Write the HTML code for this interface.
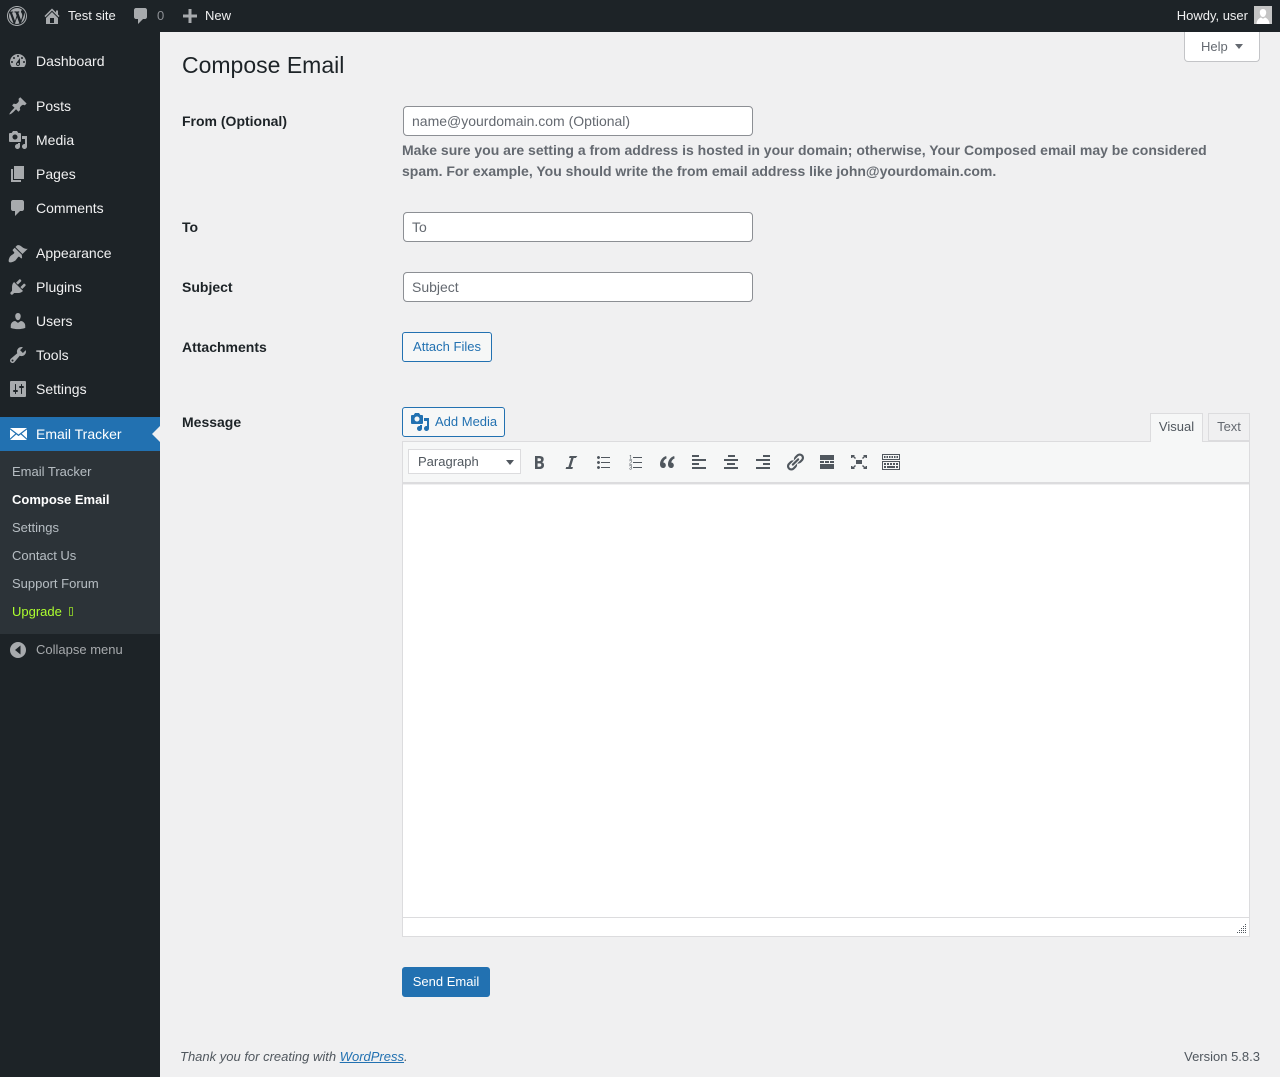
<!DOCTYPE html>
<html lang="en"><head><meta charset="utf-8"><title>Compose Email</title>
<style>
*{box-sizing:border-box}
html,body{margin:0;padding:0}
body{width:1280px;height:1077px;position:relative;overflow:hidden;background:#f0f0f1;font-family:"Liberation Sans",sans-serif;font-size:13px;color:#3c434a}
.a{position:absolute;white-space:nowrap}
#bar{left:0;top:0;width:1280px;height:32px;background:#1d2327}
#side{left:0;top:32px;width:160px;height:1045px;background:#1d2327}
.bt{color:#f0f0f1;font-size:13px;line-height:32px;top:0}
.m{left:36px;color:#f0f0f1;font-size:14px;line-height:20px}
.s{left:12px;color:rgba(240,246,252,.7);font-size:13px;line-height:18px}
svg{position:absolute;display:block;fill:#a7aaad;overflow:visible}
.t svg,svg.t{fill:#50575e}
.lb{left:182px;font-size:14px;font-weight:700;color:#1d2327;line-height:20px}
.in{left:403px;width:350px;height:30px;background:#fff;border:1px solid #8c8f94;border-radius:4px;color:#646970;font-size:14px;line-height:28px;padding-left:8px}
.btn{border:1px solid #2271b1;border-radius:3px;color:#2271b1;background:#f6f7f7;font-size:13px;line-height:28px;height:30px}
</style></head><body>

<div class="a" id="bar"></div>
<svg style="left:7px;top:6px" width="20" height="20" viewBox="0 0 20 20"><path d="M20 10c0-5.52-4.48-10-10-10S0 4.48 0 10s4.48 10 10 10 10-4.48 10-10zM10 1.01c4.96 0 8.99 4.03 8.99 8.99s-4.03 8.99-8.99 8.99S1.01 14.96 1.01 10 5.04 1.01 10 1.01zM8.01 14.82L4.96 6.61c.49-.03 1.05-.08 1.05-.08.43-.05.38-1.01-.06-.99 0 0-1.29.1-2.13.1-.15 0-.33 0-.52-.01 1.44-2.17 3.9-3.6 6.7-3.6 2.09 0 3.99.79 5.41 2.09-.6-.08-1.45.35-1.45 1.42 0 .66.38 1.22.79 1.88.31.54.5 1.22.5 2.21 0 1.34-1.27 4.48-1.27 4.48l-2.71-7.5c.48-.03.75-.16.75-.16.43-.05.38-1.1-.05-1.08 0 0-1.3.11-2.14.11-.78 0-2.11-.11-2.11-.11-.43-.02-.48 1.06-.05 1.08l.84.08 1.12 3.04zm6.02 2.15L16.64 10s.67-1.69.39-3.81c.63 1.14.94 2.42.94 3.81 0 2.96-1.56 5.58-3.94 6.97zM2.68 6.77L6.5 17.25c-2.67-1.3-4.47-4.08-4.47-7.25 0-1.16.2-2.23.65-3.23zm7.45 4.53l2.29 6.25c-.76.27-1.58.42-2.42.42-.71 0-1.4-.11-2.05-.3z"/></svg>
<svg style="left:42px;top:6px" width="20" height="20" viewBox="0 0 20 20"><path d="M16 8.5l1.53 1.53-1.06 1.06L10 4.62l-6.47 6.47-1.06-1.06L10 2.5l4 4v-2h2v4zm-6-2.46l6 5.99V18H4v-5.97zM12 17v-5H8v5h4z"/></svg>
<div class="a bt" style="left:68px">Test site</div>
<svg style="left:131px;top:6px" width="20" height="20" viewBox="0 0 20 20"><path d="M5 2h9c1.1 0 2 .9 2 2v7c0 1.1-.9 2-2 2h-2l-5 5v-5H5c-1.1 0-2-.9-2-2V4c0-1.1.9-2 2-2z"/></svg>
<div class="a bt" style="left:157px;color:#8c8f94">0</div>
<svg style="left:183px;top:9px" width="14" height="14" viewBox="0 0 14 14"><path d="M5.5 0h3v5.5H14v3H8.5V14h-3V8.500H0v-3h5.500z"/></svg>
<div class="a bt" style="left:205px">New</div>
<div class="a bt" style="right:32px">Howdy, user</div>
<div class="a" style="left:1254px;top:6px;width:18px;height:18px;background:#c4c4c4;overflow:hidden"><svg style="left:0;top:0" width="18" height="18" viewBox="0 0 18 18"><path fill="#fff" d="M9 3c2 0 3.200 1.500 3.200 3.500S11 11 9 11 5.800 8.500 5.800 6.500 7 3 9 3zM2.500 18c0-3.500 2.500-6 4.500-6.500l2 1.300 2-1.300c2 .5 4.500 3 4.500 6.500z" style="fill:#fff"/></svg></div>

<div class="a" id="side"></div>
<div class="a" style="left:0;top:417px;width:160px;height:34px;background:#2271b1"></div>
<div class="a" style="left:0;top:451px;width:160px;height:183px;background:#2c3338"></div>
<div class="a" style="left:152px;top:426px;width:0;height:0;border:8px solid transparent;border-left:0;border-right-color:#f0f0f1"></div>

<svg style="left:8px;top:51px" width="20" height="20" viewBox="0 0 20 20"><path d="M3.760 16h12.480c1.100-1.370 1.760-3.110 1.760-5 0-4.420-3.580-8-8-8s-8 3.580-8 8c0 1.890.66 3.630 1.760 5zM10 4c.55 0 1 .45 1 1s-.45 1-1 1-1-.45-1-1 .45-1 1-1zM6 6c.55 0 1 .45 1 1s-.45 1-1 1-1-.45-1-1 .45-1 1-1zm8 0c.55 0 1 .45 1 1s-.45 1-1 1-1-.45-1-1 .45-1 1-1zm-5.370 5.550L12 7v6c0 1.100-.9 2-2 2s-2-.9-2-2c0-.57.24-1.080.63-1.450zM4 10c.55 0 1 .45 1 1s-.45 1-1 1-1-.45-1-1 .45-1 1-1zm12 0c.55 0 1 .45 1 1s-.45 1-1 1-1-.45-1-1 .45-1 1-1zm-5 3c0-.55-.45-1-1-1s-1 .45-1 1 .45 1 1 1 1-.45 1-1z"/></svg>
<div class="a m" style="top:51px">Dashboard</div>
<svg style="left:8px;top:96px" width="20" height="20" viewBox="0 0 20 20"><path d="M10.440 3.020l1.820-1.820 6.360 6.350-1.830 1.820c-1.050-.68-2.480-.57-3.410.36l-.75.75c-.92.93-1.040 2.350-.35 3.410l-1.830 1.820-2.410-2.410-2.800 2.790c-.42.42-3.380 2.710-3.800 2.290s1.860-3.390 2.280-3.810l2.790-2.790L4.100 9.360l1.830-1.820c1.050.69 2.480.57 3.400-.36l.75-.75c.93-.92 1.050-2.350.36-3.410z"/></svg>
<div class="a m" style="top:96px">Posts</div>
<svg style="left:8px;top:130px" width="20" height="20" viewBox="0 0 20 20"><path d="M13 11V4c0-.55-.45-1-1-1h-1.670L9 1H5L3.670 3H2c-.55 0-1 .45-1 1v7c0 .55.45 1 1 1h10c.55 0 1-.45 1-1zM7 4.500c1.380 0 2.500 1.120 2.500 2.500S8.380 9.500 7 9.500 4.500 8.380 4.500 7 5.620 4.500 7 4.500zM14 6h5v10.500c0 1.380-1.120 2.500-2.500 2.500S14 17.880 14 16.500s1.120-2.500 2.500-2.500c.17 0 .34.02.5.05V9h-3V6zm-4 8.050V13h2v3.500c0 1.380-1.120 2.500-2.500 2.500S7 17.880 7 16.500 8.120 14 9.500 14c.17 0 .34.02.5.05z"/></svg>
<div class="a m" style="top:130px">Media</div>
<svg style="left:8px;top:164px" width="20" height="20" viewBox="0 0 20 20"><path d="M6 15V2h10v13H6zm-1 1h8v2H3V5h2v11z"/></svg>
<div class="a m" style="top:164px">Pages</div>
<svg style="left:8px;top:198px" width="20" height="20" viewBox="0 0 20 20"><path d="M5 2h9c1.100 0 2 .9 2 2v7c0 1.100-.9 2-2 2h-2l-5 5v-5H5c-1.100 0-2-.9-2-2V4c0-1.100.9-2 2-2z"/></svg>
<div class="a m" style="top:198px">Comments</div>
<svg style="left:8px;top:243px" width="20" height="20" viewBox="0 0 20 20"><path d="M14.480 11.060L7.410 3.990l1.500-1.500c.5-.56 2.300-.47 3.510.32 1.210.8 1.430 1.280 2.910 2.100 1.180.64 2.450 1.260 4.450.85zm-.71.71L6.700 4.700 4.930 6.470c-.39.39-.39 1.020 0 1.410l1.060 1.060c.39.39.39 1.030 0 1.420-.6.6-1.430 1.110-2.210 1.690-.35.26-.7.53-1.010.84C1.430 13.710 0 18 1.010 18.990c1 1 5.280-.41 6.660-1.790.31-.31.58-.66.85-1.020.57-.78 1.080-1.600 1.690-2.210.39-.39 1.020-.39 1.410 0l1.060 1.060c.39.39 1.020.39 1.410 0z"/></svg>
<div class="a m" style="top:243px">Appearance</div>
<svg style="left:8px;top:277px" width="20" height="20" viewBox="0 0 20 20"><path d="M13.110 4.360L9.870 7.600 8 5.730l3.240-3.240c.35-.34 1.050-.2 1.560.32.52.51.66 1.210.31 1.550zm-8 1.770l.91-1.120 9.010 9.010-1.190.84c-.71.71-2.630 1.160-3.820 1.160H6.140L4.900 17.260c-.59.59-1.540.59-2.120 0-.59-.58-.59-1.530 0-2.120l1.240-1.240v-3.880c0-1.130.4-3.190 1.090-3.890zm7.260 3.970l3.240-3.240c.34-.35 1.040-.21 1.550.31.52.51.66 1.210.31 1.550l-3.240 3.250z"/></svg>
<div class="a m" style="top:277px">Plugins</div>
<svg style="left:8px;top:311px" width="20" height="20" viewBox="0 0 20 20"><path d="M10 9.250c-2.270 0-2.730-3.440-2.730-3.440C7 4.020 7.820 2 9.970 2c2.160 0 2.980 2.020 2.710 3.810 0 0-.41 3.440-2.680 3.440zm0 2.570L12.720 10c2.390 0 4.520 2.330 4.520 4.530v2.490s-3.650 1.130-7.240 1.130c-3.650 0-7.240-1.130-7.240-1.130v-2.490c0-2.250 1.940-4.480 4.470-4.480z"/></svg>
<div class="a m" style="top:311px">Users</div>
<svg style="left:8px;top:345px" width="20" height="20" viewBox="0 0 20 20"><path d="M16.680 9.770c-1.340 1.340-3.300 1.670-4.950.99l-5.410 6.520c-.99.99-2.590.99-3.580 0s-.99-2.590 0-3.570l6.520-5.420c-.68-1.650-.35-3.610.99-4.950 1.280-1.280 3.120-1.620 4.720-1.060l-2.890 2.890 2.820 2.820 2.860-2.870c.53 1.580.18 3.390-1.080 4.650zM3.810 16.210c.4.39 1.040.39 1.430 0 .4-.4.4-1.040 0-1.430-.39-.4-1.030-.4-1.430 0-.39.39-.39 1.030 0 1.430z"/></svg>
<div class="a m" style="top:345px">Tools</div>
<svg style="left:8px;top:379px" width="20" height="20" viewBox="0 0 20 20"><path d="M18 17V3c0-.55-.45-1-1-1H3c-.55 0-1 .45-1 1v14c0 .55.45 1 1 1h14c.55 0 1-.45 1-1zM8 11h1c.55 0 1 .45 1 1s-.45 1-1 1H8v1.500c0 .28-.22.5-.5.5s-.5-.22-.5-.5V13H6c-.55 0-1-.45-1-1s.45-1 1-1h1V5.500c0-.28.22-.5.5-.5s.5.22.5.5V11zm5-2h-1c-.55 0-1-.45-1-1s.45-1 1-1h1V5.500c0-.28.22-.5.5-.5s.5.22.5.5V7h1c.55 0 1 .45 1 1s-.45 1-1 1h-1v5.500c0 .28-.22.5-.5.5s-.5-.22-.5-.5V9z"/></svg>
<div class="a m" style="top:379px">Settings</div>
<svg style="left:10px;top:428px" width="17" height="12" viewBox="0 0 17 12"><path style="fill:#fff" d="M0 0h17L8.500 6.500zM0 1.500l5.300 4.100L0 10.500zM17 1.500v9l-5.300-4.900zM6.300 6.400l2.200 1.700 2.200-1.700L17 12H0z"/></svg>
<div class="a m" style="top:424px;color:#fff">Email Tracker</div>

<div class="a s" style="top:463px">Email Tracker</div>
<div class="a s" style="top:491px;color:#fff;font-weight:700">Compose Email</div>
<div class="a s" style="top:519px">Settings</div>
<div class="a s" style="top:547px">Contact Us</div>
<div class="a s" style="top:575px">Support Forum</div>
<div class="a s" style="top:603px;color:#adff2f">Upgrade</div>
<div class="a" style="left:69px;top:607px;width:4px;height:9px;border:1px solid #7fb82a"></div>
<svg style="left:10px;top:642px" width="16" height="16" viewBox="0 0 16 16"><path fill-rule="evenodd" d="M8 0a8 8 0 1 1 0 16A8 8 0 0 1 8 0zM10.500 3.500L5 8l5.500 4.500z"/></svg>
<div class="a s" style="left:36px;top:641px;color:#a7aaad">Collapse menu</div>

<div class="a" style="left:1184px;top:32px;width:76px;height:30px;background:#fff;border:1px solid #c3c4c7;border-top:0;border-radius:0 0 4px 4px"></div>
<div class="a" style="left:1201px;top:38px;font-size:13px;line-height:18px;color:#646970">Help</div>
<div class="a" style="left:1235px;top:44px;width:0;height:0;border:4px solid transparent;border-top:5px solid #646970;border-bottom:0"></div>

<div class="a" style="left:182px;top:50px;font-size:23px;line-height:30px;color:#1d2327">Compose Email</div>

<div class="a lb" style="top:111px">From (Optional)</div>
<div class="a in" style="top:106px">name@yourdomain.com (Optional)</div>
<div class="a" style="left:402px;top:140px;font-size:14px;font-weight:700;line-height:21px;color:#646970">Make sure you are setting a from address is hosted in your domain; otherwise, Your Composed email may be considered<br>spam. For example, You should write the from email address like john@yourdomain.com.</div>

<div class="a lb" style="top:217px">To</div>
<div class="a in" style="top:212px">To</div>
<div class="a lb" style="top:277px">Subject</div>
<div class="a in" style="top:272px">Subject</div>
<div class="a lb" style="top:337px">Attachments</div>
<div class="a btn" style="left:402px;top:332px;width:90px;text-align:center">Attach Files</div>

<div class="a lb" style="top:412px">Message</div>
<div class="a btn" style="left:402px;top:407px;width:103px;padding-left:32px">Add Media</div>
<svg style="left:410px;top:412px" width="20" height="20" viewBox="0 0 20 20"><path style="fill:#2271b1" d="M13 11V4c0-.55-.45-1-1-1h-1.670L9 1H5L3.670 3H2c-.55 0-1 .45-1 1v7c0 .55.45 1 1 1h10c.55 0 1-.45 1-1zM7 4.500c1.380 0 2.500 1.120 2.500 2.500S8.380 9.500 7 9.500 4.500 8.380 4.500 7 5.620 4.500 7 4.500zM14 6h5v10.500c0 1.380-1.120 2.500-2.500 2.500S14 17.880 14 16.500s1.120-2.500 2.500-2.500c.17 0 .34.02.5.05V9h-3V6zm-4 8.050V13h2v3.500c0 1.380-1.120 2.500-2.500 2.500S7 17.880 7 16.500 8.120 14 9.500 14c.17 0 .34.02.5.05z"/></svg>

<div class="a" style="left:1208px;top:413px;width:42px;height:28px;background:#f0f0f1;border:1px solid #dcdcde;color:#646970;text-align:center;line-height:26px">Text</div>
<div class="a" style="left:402px;top:441px;width:848px;height:496px;background:#fff;border:1px solid #dcdcde"></div>
<div class="a" style="left:403px;top:442px;width:846px;height:41px;background:#f6f7f7"></div>
<div class="a" style="left:403px;top:482px;width:846px;height:2px;background:#dcdcde"></div>
<div class="a" style="left:403px;top:484px;width:846px;height:1px;background:#f0f0f1"></div>
<div class="a" style="left:1150px;top:413px;width:53px;height:29px;background:#f6f7f7;border:1px solid #dcdcde;border-bottom:0;color:#50575e;text-align:center;line-height:26px">Visual</div>
<div class="a" style="left:403px;top:917px;width:846px;height:1px;background:#dcdcde"></div>

<div class="a" style="left:408px;top:449px;width:113px;height:25px;background:#fff;border:1px solid #dcdcde;color:#50575e;line-height:23px;padding-left:9px">Paragraph</div>
<div class="a" style="left:506px;top:460px;width:0;height:0;border:4px solid transparent;border-top:5px solid #50575e;border-bottom:0"></div>

<svg class="t" style="left:529px;top:452px" width="20" height="20" viewBox="0 0 20 20"><path fill-rule="evenodd" d="M6 4v13h4.540c1.370 0 2.460-.33 3.260-1 .8-.66 1.200-1.580 1.200-2.770 0-.84-.17-1.510-.51-2.010s-.9-.85-1.670-1.030v-.09c.57-.1 1.020-.4 1.360-.9s.51-1.130.51-1.910c0-1.140-.39-1.980-1.170-2.500C12.750 4.260 11.500 4 9.780 4H6zm2.570 5.150V6.260h1.360c.73 0 1.270.11 1.610.32.34.22.51.58.51 1.070 0 .54-.16.92-.47 1.150s-.82.35-1.510.35h-1.500zm0 2.190h1.600c1.440 0 2.160.53 2.160 1.610 0 .6-.17 1.050-.51 1.340s-.86.45-1.570.45H8.570v-3.400z"/></svg>
<svg class="t" style="left:561px;top:452px" width="20" height="20" viewBox="0 0 20 20"><path d="M14.780 6h-2.130l-2.800 9h2.120l-.62 2H4.600l.62-2h2.140l2.800-9H8.030l.62-2h7.750z"/></svg>
<svg class="t" style="left:593px;top:452px" width="20" height="20" viewBox="0 0 20 20"><path d="M5.500 7C4.670 7 4 6.330 4 5.500 4 4.680 4.670 4 5.500 4 6.320 4 7 4.680 7 5.500 7 6.330 6.320 7 5.500 7zM8 5h9v1H8V5zm-2.500 7c-.83 0-1.500-.67-1.500-1.500C4 9.680 4.670 9 5.500 9c.82 0 1.500.68 1.500 1.500 0 .83-.68 1.500-1.500 1.500zM8 10h9v1H8v-1zm-2.500 7c-.83 0-1.500-.67-1.500-1.500 0-.82.67-1.500 1.500-1.500.82 0 1.500.68 1.500 1.500 0 .83-.68 1.500-1.500 1.500zM8 15h9v1H8v-1z"/></svg>
<svg class="t" style="left:625px;top:452px" width="20" height="20" viewBox="0 0 20 20"><path d="M8 5h9v1H8zM8 10h9v1H8zM8 15h9v1H8z"/><text x="4" y="7.500" font-size="6" font-family="Liberation Sans" style="fill:#50575e">1</text><text x="4" y="12.500" font-size="6" font-family="Liberation Sans" style="fill:#50575e">2</text><text x="4" y="17.500" font-size="6" font-family="Liberation Sans" style="fill:#50575e">3</text></svg>
<svg class="t" style="left:657px;top:452px" width="20" height="20" viewBox="0 0 20 20"><path d="M9.200 4C5.700 5.100 3 8 3 12.300 3 14.600 4.300 16 6 16c1.700 0 2.800-1.200 2.800-2.800 0-1.500-1-2.600-2.500-2.700.2-1.800 1.400-3.200 3.300-4.100zM17.200 4c-3.500 1.100-6.200 4-6.200 8.300 0 2.300 1.300 3.700 3 3.700 1.700 0 2.800-1.200 2.800-2.800 0-1.500-1-2.600-2.500-2.700.2-1.800 1.400-3.200 3.300-4.100z"/></svg>
<svg class="t" style="left:689px;top:452px" width="20" height="20" viewBox="0 0 20 20"><path d="M3 3h7v2H3zM3 7h14v2H3zM3 11h7v2H3zM3 15h14v2H3z"/></svg>
<svg class="t" style="left:721px;top:452px" width="20" height="20" viewBox="0 0 20 20"><path d="M7 3h7v2H7zM3 7h14v2H3zM6 11h8v2H6zM3 15h14v2H3z"/></svg>
<svg class="t" style="left:753px;top:452px" width="20" height="20" viewBox="0 0 20 20"><path d="M10 3h7v2h-7zM3 7h14v2H3zM10 11h7v2h-7zM3 15h14v2H3z"/></svg>
<svg class="t" style="left:785px;top:452px" width="20" height="20" viewBox="0 0 20 20"><path d="M17.740 2.760c1.680 1.690 1.680 4.410 0 6.100l-1.530 1.520c-1.120 1.120-2.700 1.470-4.140 1.090l2.620-2.610.76-.77.76-.76c.84-.84.84-2.200 0-3.040-.84-.85-2.200-.85-3.040 0l-.77.76-3.380 3.380c-.37-1.440-.02-3.020 1.100-4.140l1.520-1.530c1.690-1.680 4.420-1.680 6.100 0zM8.590 13.430l5.340-5.340c.42-.42.42-1.100 0-1.520-.44-.43-1.130-.39-1.530 0l-5.330 5.340c-.42.42-.42 1.100 0 1.520.44.43 1.130.39 1.520 0zm-.76 2.290l4.140-4.150c.38 1.440.03 3.020-1.090 4.140l-1.520 1.530c-1.690 1.680-4.410 1.680-6.100 0-1.680-1.680-1.680-4.420 0-6.100l1.530-1.520c1.120-1.120 2.700-1.470 4.140-1.100l-4.140 4.150c-.85.84-.85 2.200 0 3.050.84.84 2.200.84 3.040 0z"/></svg>
<svg class="t" style="left:817px;top:452px" width="20" height="20" viewBox="0 0 20 20"><path d="M3 3h14v5H3zM3 9h4v2H3zM8 9h4v2H8zM13 9h4v2h-4zM3 12h14v5H3z"/></svg>
<svg class="t" style="left:849px;top:452px" width="20" height="20" viewBox="0 0 20 20"><path d="M7 8h6v4H7zM2 3h4L5 4l2 2-1 1-2-2-1 1H2zM18 3v3h-1l-1-1-2 2-1-1 2-2-1-1zM2 17v-3h1l1 1 2-2 1 1-2 2 1 1zM18 17h-4l1-1-2-2 1-1 2 2 1-1h1z"/></svg>
<svg class="t" style="left:881px;top:452px" width="20" height="20" viewBox="0 0 20 20"><path fill-rule="evenodd" d="M1 2h18v6H1zM2 3v4h16V3zM3 4h1.500v2H3zM5.500 4H7v2H5.500zM8 4h1.500v2H8zM10.500 4H12v2h-1.500zM13 4h1.500v2H13zM15.500 4H17v2h-1.500zM1 9h18v9H1zM2 10v7h16v-7zM3 11h2v2H3zM6 11h2v2H6zM9 11h2v2H9zM12 11h2v2h-2zM15 11h2v2h-2zM3 14h2v2H3zM6 14h8v2H6zM15 14h2v2h-2z"/></svg>

<svg style="left:1237px;top:924px" width="10" height="10" viewBox="0 0 10 10"><path style="fill:#50575e" d="M8 0h1v1H8zM6 2h1v1H6zM8 2h1v1H8zM4 4h1v1H4zM6 4h1v1H6zM8 4h1v1H8zM2 6h1v1H2zM4 6h1v1H4zM6 6h1v1H6zM8 6h1v1H8zM0 8h1v1H0zM2 8h1v1H2zM4 8h1v1H4zM6 8h1v1H6zM8 8h1v1H8z"/></svg>

<div class="a" style="left:402px;top:967px;width:88px;height:30px;background:#2271b1;border:1px solid #2271b1;border-radius:3px;color:#fff;text-align:center;line-height:28px">Send Email</div>

<div class="a" style="left:180px;top:1048px;font-style:italic;line-height:18px;color:#50575e">Thank you for creating with <a href="#" style="color:#2271b1">WordPress</a>.</div>
<div class="a" style="right:20px;top:1048px;line-height:18px;color:#50575e">Version 5.8.3</div>
</body></html>
